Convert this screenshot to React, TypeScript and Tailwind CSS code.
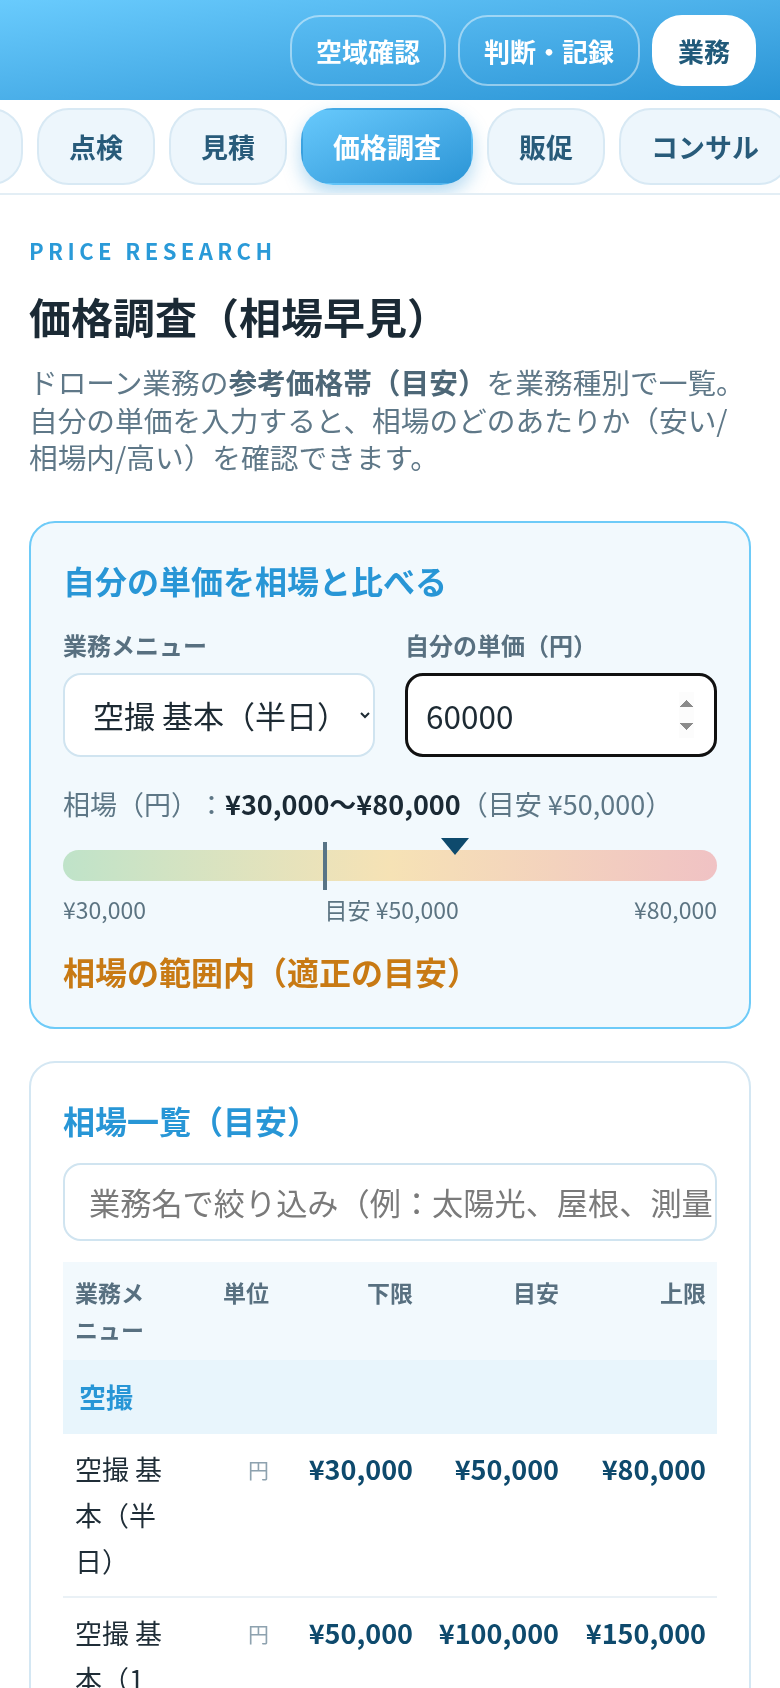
import { useEffect, useRef, useState } from "react";

type PriceRow = {
  name: string;
  unit: string;
  low: number;
  mid: number;
  high: number;
};

type PriceGroup = {
  label: string;
  rows: PriceRow[];
};

const topLinks = ["空域確認", "判断・記録", "業務"];
const tabs = ["案件", "点検", "見積", "価格調査", "販促", "コンサル"];

const groups: PriceGroup[] = [
  {
    label: "空撮",
    rows: [
      { name: "空撮 基本（半日）", unit: "円", low: 30000, mid: 50000, high: 80000 },
      { name: "空撮 基本（1日）", unit: "円", low: 50000, mid: 100000, high: 150000 },
      { name: "空撮 動画編集込み", unit: "円", low: 80000, mid: 150000, high: 250000 },
    ],
  },
  {
    label: "点検",
    rows: [{ name: "太陽光パネル点検", unit: "円", low: 40000, mid: 70000, high: 120000 }],
  },
];

const yen = (n: number) => `¥${n.toLocaleString("en-US")}`;

function TopBar() {
  return (
    <header className="flex h-[100px] items-center justify-end gap-3 bg-linear-to-br from-[#69cbfd] to-[#2894d5] px-6">
      {topLinks.map((label, index) => {
        const active = index === topLinks.length - 1;
        return (
          <button
            key={label}
            className={`rounded-[30px] border-2 px-6 py-[15px] text-[26px] leading-[37px] font-bold ${
              active ? "border-white bg-white text-[#215a7a]" : "border-white/45 text-white"
            }`}
          >
            {label}
          </button>
        );
      })}
    </header>
  );
}

function TabBar() {
  const scroller = useRef<HTMLDivElement>(null);

  useEffect(() => {
    if (scroller.current) scroller.current.scrollLeft = 111;
  }, []);

  return (
    <div
      ref={scroller}
      className="overflow-x-auto border-b-2 border-[#e3eef5] bg-white [scrollbar-width:none]"
    >
      <div className="flex w-max gap-[14px] px-4 py-2">
        {tabs.map((tab) => {
          const active = tab === "価格調査";
          return (
            <button
              key={tab}
              className={`shrink-0 rounded-[32px] border-2 px-[30px] py-[18px] text-[27px] leading-[37px] font-bold ${
                active
                  ? "border-transparent bg-linear-to-br from-[#67c9fc] to-[#2a95d6] text-white shadow-[0_8px_18px_rgba(42,150,214,0.35)]"
                  : "border-[#d8e9f4] bg-[#edf6fc] text-[#285b7a]"
              }`}
            >
              {tab}
            </button>
          );
        })}
      </div>
    </div>
  );
}

function CompareCard() {
  const [menu, setMenu] = useState("half");
  const [price, setPrice] = useState("60000");
  const low = 30000;
  const mid = 50000;
  const high = 80000;
  const value = Number(price) || 0;
  const pos = Math.min(100, Math.max(0, ((value - low) / (high - low)) * 100));
  const midPos = ((mid - low) / (high - low)) * 100;

  return (
    <section className="rounded-[26px] border-2 border-[#6ecbf8] bg-[#f2f9fd] px-8 pt-[36px] pb-[35px]">
      <h2 className="text-[32px] leading-[42px] font-bold text-[#2896d6]">自分の単価を相場と比べる</h2>

      <div className="mt-[28px] grid grid-cols-2 gap-[30px]">
        <label className="flex flex-col gap-3">
          <span className="text-[24px] leading-[32px] font-bold text-[#587080]">業務メニュー</span>
          <select
            value={menu}
            onChange={(e) => setMenu(e.target.value)}
            className="h-[84px] w-full rounded-[18px] border-2 border-[#d0e4f0] bg-white pl-[24px] pr-1 text-[31px] text-[#1d2a33]"
          >
            <option value="half">空撮 基本（半日）（円）</option>
            <option value="day">空撮 基本（1日）（円）</option>
          </select>
        </label>
        <label className="flex flex-col gap-3">
          <span className="text-[24px] leading-[32px] font-bold text-[#587080]">自分の単価（円）</span>
          <input
            type="number"
            autoFocus
            value={price}
            onChange={(e) => setPrice(e.target.value)}
            className="h-[84px] w-full rounded-[18px] border-[3px] border-[#111] bg-white pr-5 pl-[18px] text-[31.5px] text-[#1d2a33] outline-none"
          />
        </label>
      </div>

      <p className="mt-[29px] text-[27px] leading-[36px] text-[#5e7786]">
        相場（円）：<b className="font-bold text-[#1b2a35]">{yen(low)}〜{yen(high)}</b>（目安 {yen(mid)}）
      </p>

      <div className="relative mt-4 h-[52px]">
        <div className="absolute top-[12px] right-0 left-0 h-[31px] rounded-full bg-linear-to-r from-[#bfe3c9] via-[#f6e2b5] to-[#f0c2c4]" />
        <div
          className="absolute top-[4px] h-[48px] w-[4px] -translate-x-1/2 bg-[#587486]"
          style={{ left: `${midPos}%` }}
        />
        <svg
          className="absolute top-0 -translate-x-1/2"
          style={{ left: `${pos}%` }}
          width="28"
          height="17"
          viewBox="0 0 28 17"
        >
          <polygon points="0,0 28,0 14,17" fill="#0e4a6d" />
        </svg>
      </div>

      <div className="relative mt-1 h-[30px] text-[23px] leading-[30px] text-[#5c7482]">
        <span className="absolute left-0">{yen(low)}</span>
        <span className="absolute" style={{ left: `${midPos}%` }}>
          目安 {yen(mid)}
        </span>
        <span className="absolute right-0">{yen(high)}</span>
      </div>

      <p className="mt-[26px] text-[32px] leading-[42px] font-bold text-[#c87a14]">相場の範囲内（適正の目安）</p>
    </section>
  );
}

function PriceTable() {
  const [query, setQuery] = useState("");
  const cols = "grid grid-cols-[114px_104px_144px_146px_147px]";

  return (
    <section className="mt-8 rounded-[26px] border-2 border-[#d4e7f3] bg-white px-8 pt-[36px] pb-8">
      <h2 className="text-[32px] leading-[42px] font-bold text-[#2896d6]">相場一覧（目安）</h2>

      <input
        type="text"
        value={query}
        onChange={(e) => setQuery(e.target.value)}
        placeholder="業務名で絞り込み（例：太陽光、屋根、測量など）"
        className="mt-[22px] h-[78px] w-full rounded-[18px] border-2 border-[#d0e4f0] bg-white pr-0 pl-6 text-[31.2px] text-[#1d2a33] outline-none placeholder:text-[#7a7a7a]"
      />

      <div className="mt-[21px]">
        <div className={`${cols} bg-[#f2f9fd] py-3 text-[23px] leading-[37px] font-bold text-[#587080]`}>
          <span className="px-3">業務メニュー</span>
          <span className="px-3 text-right">単位</span>
          <span className="px-3 text-right">下限</span>
          <span className="px-3 text-right">目安</span>
          <span className="px-3 text-right">上限</span>
        </div>

        {groups.map((group) => (
          <div key={group.label}>
            <div className="bg-[#e8f5fc] px-4 py-[14px] text-[27px] leading-[46px] font-bold text-[#2896d6]">
              {group.label}
            </div>
            {group.rows
              .filter((row) => row.name.includes(query))
              .map((row) => (
                <div key={row.name} className={`${cols} border-b-2 border-[#eaf1f6] py-3 text-[27px] leading-[46px]`}>
                  <span className="px-3 text-[#1f2d37]">{row.name}</span>
                  <span className="px-3 text-right text-[21px] text-[#8ea2af]">{row.unit}</span>
                  <span className="px-3 text-right font-bold text-[#0e4a6d]">{yen(row.low)}</span>
                  <span className="px-3 text-right font-bold text-[#0e4a6d]">{yen(row.mid)}</span>
                  <span className="px-3 text-right font-bold text-[#0e4a6d]">{yen(row.high)}</span>
                </div>
              ))}
          </div>
        ))}
      </div>
    </section>
  );
}

export default function App() {
  return (
    <div className="min-h-screen bg-white font-['Noto_Sans_CJK_JP','Noto_Sans',sans-serif] [text-spacing-trim:space-all] [text-autospace:no-autospace]">
      <TopBar />
      <TabBar />

      <main className="px-[29px] pt-[40px] pb-10">
        <p className="text-[22px] leading-[30px] font-semibold tracking-[0.2em] text-[#2a9ad8]">PRICE RESEARCH</p>
        <h1 className="mt-[23px] text-[42px] leading-[55px] font-bold text-[#1b2a35]">価格調査（相場早見）</h1>
        <p className="mt-5 text-[28.7px] leading-[37.5px] text-[#5f7888]">
          ドローン業務の<b className="font-bold text-[#4d6777]">参考価格帯（目安）</b>
          を業務種別で一覧。自分の単価を入力すると、相場のどのあたりか（安い/相場内/高い）を確認できます。
        </p>

        <div className="mt-[45px]">
          <CompareCard />
          <PriceTable />
        </div>
      </main>
    </div>
  );
}
